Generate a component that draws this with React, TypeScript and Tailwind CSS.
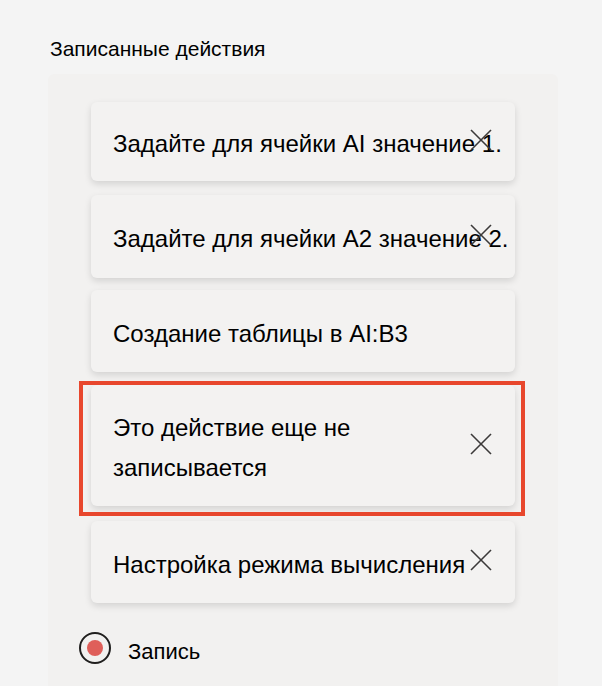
import React from "react";

type Action = {
  id: number;
  label: React.ReactNode;
  removable: boolean;
  height: string;
  gap: string;
  flagged?: boolean;
};

const ACTIONS: Action[] = [
  { id: 1, label: "Задайте для ячейки AI значение 1.", removable: true, height: "h-[79px]", gap: "mt-0" },
  { id: 2, label: "Задайте для ячейки A2 значение 2.", removable: true, height: "h-[83px]", gap: "mt-[14px]" },
  { id: 3, label: "Создание таблицы в AI:B3", removable: false, height: "h-[82px]", gap: "mt-[12px]" },
  {
    id: 4,
    label: (
      <>
        Это действие еще не
        <br />
        записывается
      </>
    ),
    removable: true,
    height: "h-[121px]",
    gap: "mt-[13px]",
    flagged: true,
  },
  { id: 5, label: "Настройка режима вычисления", removable: true, height: "h-[82px]", gap: "mt-[15px]" },
];

function CloseIcon() {
  return (
    <svg width="22" height="22" viewBox="0 0 22 22" fill="none" stroke="#3b3a39" strokeWidth="1.6">
      <path d="M1 1 21 21" />
      <path d="M21 1 1 21" />
    </svg>
  );
}

function ActionCard({ action }: { action: Action }) {
  return (
    <div
      className={`relative ${action.gap} ${action.height} w-[424px] rounded-md bg-[#f3f2f1] shadow-[0_3px_7px_rgba(0,0,0,0.13)] flex items-center pl-[22px] pt-[5px]`}
    >
      <span className="whitespace-nowrap text-[24px] leading-[40px] text-black">{action.label}</span>
      {action.removable && (
        <span className="absolute right-[23px] top-1/2 -translate-y-1/2 -mt-[2px]">
          <CloseIcon />
        </span>
      )}
      {action.flagged && (
        <span className="pointer-events-none absolute -left-[12px] -top-[4px] -right-[10px] -bottom-[10px] border-4 border-[#e8472d]" />
      )}
    </div>
  );
}

export default function App() {
  return (
    <div
      className="w-[602px] h-[686px] overflow-hidden bg-[#f4f4f4] text-black"
      style={{ fontFamily: '"Liberation Sans", Arial, sans-serif' }}
    >
      <h2 className="pl-[50px] pt-[37px] text-[21px] leading-[24px] font-normal">Записанные действия</h2>

      <div className="ml-[48px] mt-[13px] w-[510px] h-[640px] rounded-t-md bg-[#f2f1f0] pt-[28px] pl-[43px]">
        {ACTIONS.map((a) => (
          <ActionCard key={a.id} action={a} />
        ))}

        <div className="mt-[27px] -ml-[12px] flex items-center gap-[17px]">
          <span className="flex h-[32px] w-[32px] items-center justify-center rounded-full border-2 border-[#201f1e]">
            <span className="h-[16px] w-[16px] rounded-full bg-[#df5f5a]" />
          </span>
          <span className="pt-[8px] text-[22px] leading-[28px]">Запись</span>
        </div>
      </div>
    </div>
  );
}
